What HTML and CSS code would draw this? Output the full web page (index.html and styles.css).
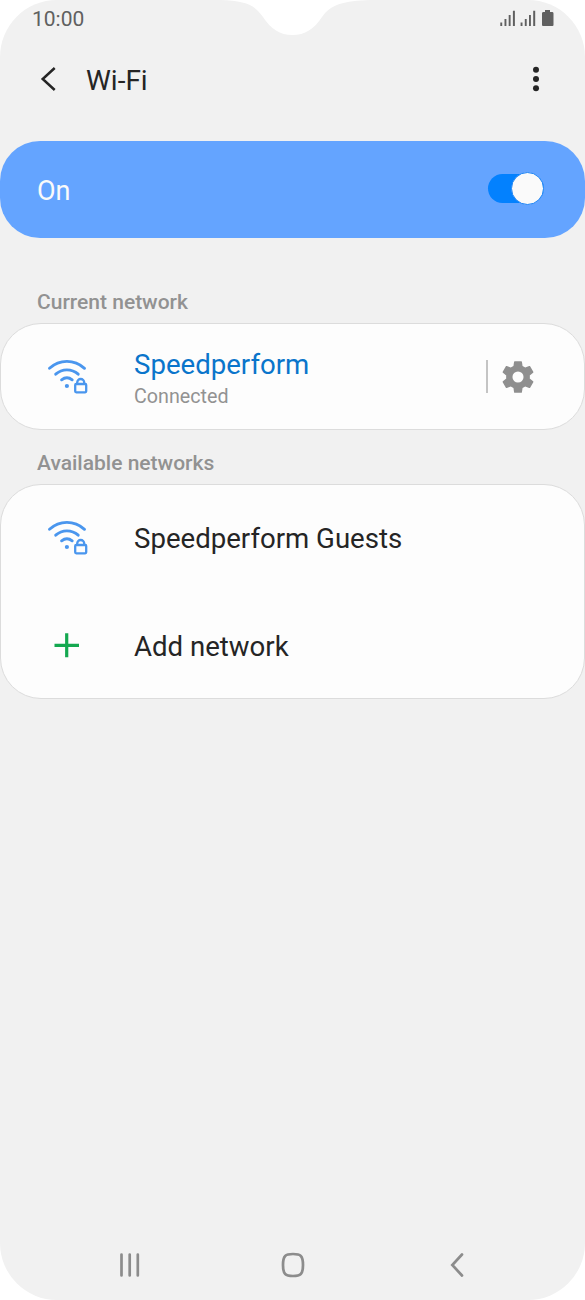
FILE: index.html
```
<!DOCTYPE html>
<html lang="en">
<head>
    <meta charset="UTF-8">
    <meta name="viewport" content="width=device-width, initial-scale=1.0">
    <title>Wi-Fi</title>
    <link rel="stylesheet" href="styles.css">
</head>
<body>
    <div class="screen">
        <svg class="notch" width="150" height="36" viewBox="0 0 150 36">
            <path d="M0 0C25 1 34 4 43 17C51 29 60 35 72.500 35C85 35 94 29 102 17C111 4 124 1 150 0Z" fill="#fff"/>
        </svg>

        <div class="status-bar">
            <span class="time">10:00</span>
            <svg width="56" height="20" viewBox="0 0 56 20" fill="#606060">
                <path d="M0.300 13.500h1.900v3.500h-1.900zM4.500 10h1.900v7h-1.900zM8.700 6h1.900v11h-1.900zM12.900 1.700h2v15.300h-2z"/>
                <path d="M20.600 13.500h1.900v3.500h-1.900zM24.800 10h1.900v7h-1.900zM29 6h1.900v11h-1.900zM33.200 1.700h2v15.300h-2z"/>
                <path d="M42 4.500q0-1.500 1-1.500h2v-2h5v2h2.500q1 0 1 1.500v11.500q0 1-1 1h-9.500q-1 0-1-1z"/>
            </svg>
        </div>

        <div class="header">
            <svg width="16" height="26" viewBox="0 0 16 26">
                <path d="M14.700 2L2.700 13L14.700 24" fill="none" stroke="#252525" stroke-width="2.500"/>
            </svg>
            <h1>Wi-Fi</h1>
            <svg class="menu" width="8" height="26" viewBox="0 0 8 26" fill="#252525">
                <circle cx="4" cy="3.700" r="3"/>
                <circle cx="4" cy="13" r="3"/>
                <circle cx="4" cy="22.200" r="3"/>
            </svg>
        </div>

        <div class="switch-bar">
            <span>On</span>
            <div class="toggle"><div class="knob"></div></div>
        </div>

        <h2>Current network</h2>
        <div class="card">
            <div class="row">
                <svg class="icon" width="42" height="38" viewBox="0 0 42 38" fill="none" stroke="#4a96ee" stroke-width="2.900" stroke-linecap="round">
                    <path d="M2.500 10.300Q10 3.400 19.900 3.400T37.500 10.300M8.700 16.200Q13.500 11.900 19.900 11.900T31.200 16.200M14.600 21.800Q19.900 17.600 25.200 21.800"/>
                    <circle cx="19.900" cy="28" r="2.100" fill="#4a96ee" stroke="none"/>
                    <rect x="28.200" y="26" width="11" height="8.300" rx="1" stroke-width="2.300"/>
                    <path d="M30.200 25.800v-1.300a3.500 3.500 0 0 1 7 0v1.300" stroke-width="2.300"/>
                </svg>
                <div class="text">
                    <div class="name connected">Speedperform</div>
                    <div class="state">Connected</div>
                </div>
                <div class="divider"></div>
                <svg width="38" height="38" viewBox="0 0 24 24" fill="#8f8f8f">
                    <path d="M19.430 12.980c.040-.320.070-.640.070-.980s-.030-.660-.070-.980l2.110-1.650c.190-.150.240-.420.120-.640l-2-3.460c-.120-.220-.390-.300-.610-.220l-2.490 1c-.520-.400-1.080-.730-1.690-.980l-.380-2.650C14.460 2.180 14.250 2 14 2h-4c-.250 0-.460.180-.490.420l-.380 2.650c-.610.250-1.170.590-1.690.980l-2.490-1c-.230-.090-.490 0-.610.220l-2 3.460c-.130.220-.070.490.120.640l2.110 1.650c-.040.320-.070.650-.070.980s.030.660.070.980l-2.110 1.650c-.190.150-.240.420-.120.640l2 3.460c.120.220.390.300.610.220l2.490-1c.520.400 1.080.730 1.690.980l.380 2.650c.030.240.240.420.490.420h4c.250 0 .460-.180.490-.420l.380-2.650c.610-.250 1.170-.590 1.690-.980l2.490 1c.230.090.490 0 .610-.220l2-3.460c.120-.220.070-.490-.120-.640l-2.110-1.650zM12 15.500a3.500 3.500 0 1 1 0-7 3.500 3.500 0 0 1 0 7z"/>
                </svg>
            </div>
        </div>

        <h2>Available networks</h2>
        <div class="card">
            <div class="row">
                <svg class="icon" width="42" height="38" viewBox="0 0 42 38" fill="none" stroke="#4a96ee" stroke-width="2.900" stroke-linecap="round">
                    <path d="M2.500 10.300Q10 3.400 19.900 3.400T37.500 10.300M8.700 16.200Q13.500 11.900 19.900 11.900T31.200 16.200M14.600 21.800Q19.900 17.600 25.200 21.800"/>
                    <circle cx="19.900" cy="28" r="2.100" fill="#4a96ee" stroke="none"/>
                    <rect x="28.200" y="26" width="11" height="8.300" rx="1" stroke-width="2.300"/>
                    <path d="M30.200 25.800v-1.300a3.500 3.500 0 0 1 7 0v1.300" stroke-width="2.300"/>
                </svg>
                <div class="name">Speedperform Guests</div>
            </div>
            <div class="row">
                <svg class="icon" width="42" height="38" viewBox="0 0 42 38">
                    <path d="M7.500 20.300h24.500M19.700 8.300v24" stroke="#14a850" stroke-width="3.200"/>
                </svg>
                <div class="name">Add network</div>
            </div>
        </div>

        <div class="nav-bar">
            <svg width="24" height="28" viewBox="0 0 24 28" fill="none" stroke="#8c8c8c" stroke-width="2.700" stroke-linecap="round">
                <path d="M3.500 3.500v21M11.700 3.500v21M19.800 3.500v21"/>
            </svg>
            <svg width="28" height="28" viewBox="0 0 28 28" fill="none" stroke="#8c8c8c" stroke-width="2.700">
                <path d="M14 3C21.500 3 24 4.500 24 14S21.500 25 14 25S4 23.500 4 14S6.500 3 14 3Z"/>
            </svg>
            <svg width="18" height="28" viewBox="0 0 18 28" fill="none" stroke="#8c8c8c" stroke-width="2.700" stroke-linecap="round">
                <path d="M14 3.500L4.300 14L14 24.500"/>
            </svg>
        </div>
    </div>
</body>
</html>
```
FILE: styles.css
```
* {
    box-sizing: border-box;
}

body {
    margin: 0;
    background: #fff;
    font-family: Roboto, sans-serif;
    color: #252525;
}

svg {
    display: block;
    flex-shrink: 0;
}

.screen {
    position: relative;
    display: flex;
    flex-direction: column;
    width: 585px;
    height: 1300px;
    background: #f1f1f1;
    border-radius: 57px;
    overflow: hidden;
}

.notch {
    position: absolute;
    top: 0;
    left: 220px;
}

.status-bar {
    display: flex;
    justify-content: space-between;
    height: 38px;
    padding: 9px 29px 0 32px;
}

.time {
    font-size: 21px;
    line-height: 20px;
    color: #606060;
}

.header {
    display: flex;
    align-items: center;
    height: 82px;
    padding: 0 45px 0 40px;
}

h1 {
    margin: 3px 0 0 30px;
    font-size: 28px;
    font-weight: 400;
}

.menu {
    margin-left: auto;
}

.switch-bar {
    display: flex;
    align-items: center;
    justify-content: space-between;
    height: 97.5px;
    margin-top: 20.5px;
    padding: 0 41px 0 37px;
    background: #64a4ff;
    border-radius: 40px;
    color: #fafafa;
    font-size: 27px;
}

.switch-bar span {
    padding-top: 3px;
}

.toggle {
    display: flex;
    align-items: center;
    justify-content: flex-end;
    width: 56px;
    height: 29px;
    margin-bottom: 1px;
    background: #0381fe;
    border-radius: 15px;
}

.knob {
    flex-shrink: 0;
    width: 33px;
    height: 33px;
    background: #fafafa;
    border: 1px solid #2186f5;
    border-radius: 50%;
}

h2 {
    margin: 0;
    padding-left: 37px;
    font-size: 21px;
    font-weight: 500;
    line-height: 24px;
    color: #929292;
}

.switch-bar + h2 {
    margin-top: 52px;
}

.card + h2 {
    margin-top: 21px;
}

.card {
    margin-top: 9px;
    background: #fdfdfd;
    border: 1px solid #dcdcdc;
    border-radius: 41px;
}

.row {
    display: flex;
    align-items: center;
    height: 105px;
    padding: 0 47px 0 46px;
}

.row + .row {
    height: 108px;
}

.icon {
    margin-right: 45px;
}

.name {
    padding-top: 3px;
    font-size: 27.6px;
    line-height: 34px;
}

.row + .row .name {
    padding-top: 5px;
}

.connected {
    color: #0a75cb;
}

.state {
    margin-top: 3px;
    font-size: 19.7px;
    line-height: 24px;
    color: #929292;
}

.divider {
    width: 2px;
    height: 33px;
    margin: 0 11px 0 auto;
    background: #c4c4c4;
}

.nav-bar {
    display: flex;
    align-items: center;
    justify-content: space-between;
    height: 70px;
    margin-top: auto;
    padding: 0 119px 0 118px;
}

.nav-bar svg:nth-child(2) {
    margin-right: 4px;
}
```
